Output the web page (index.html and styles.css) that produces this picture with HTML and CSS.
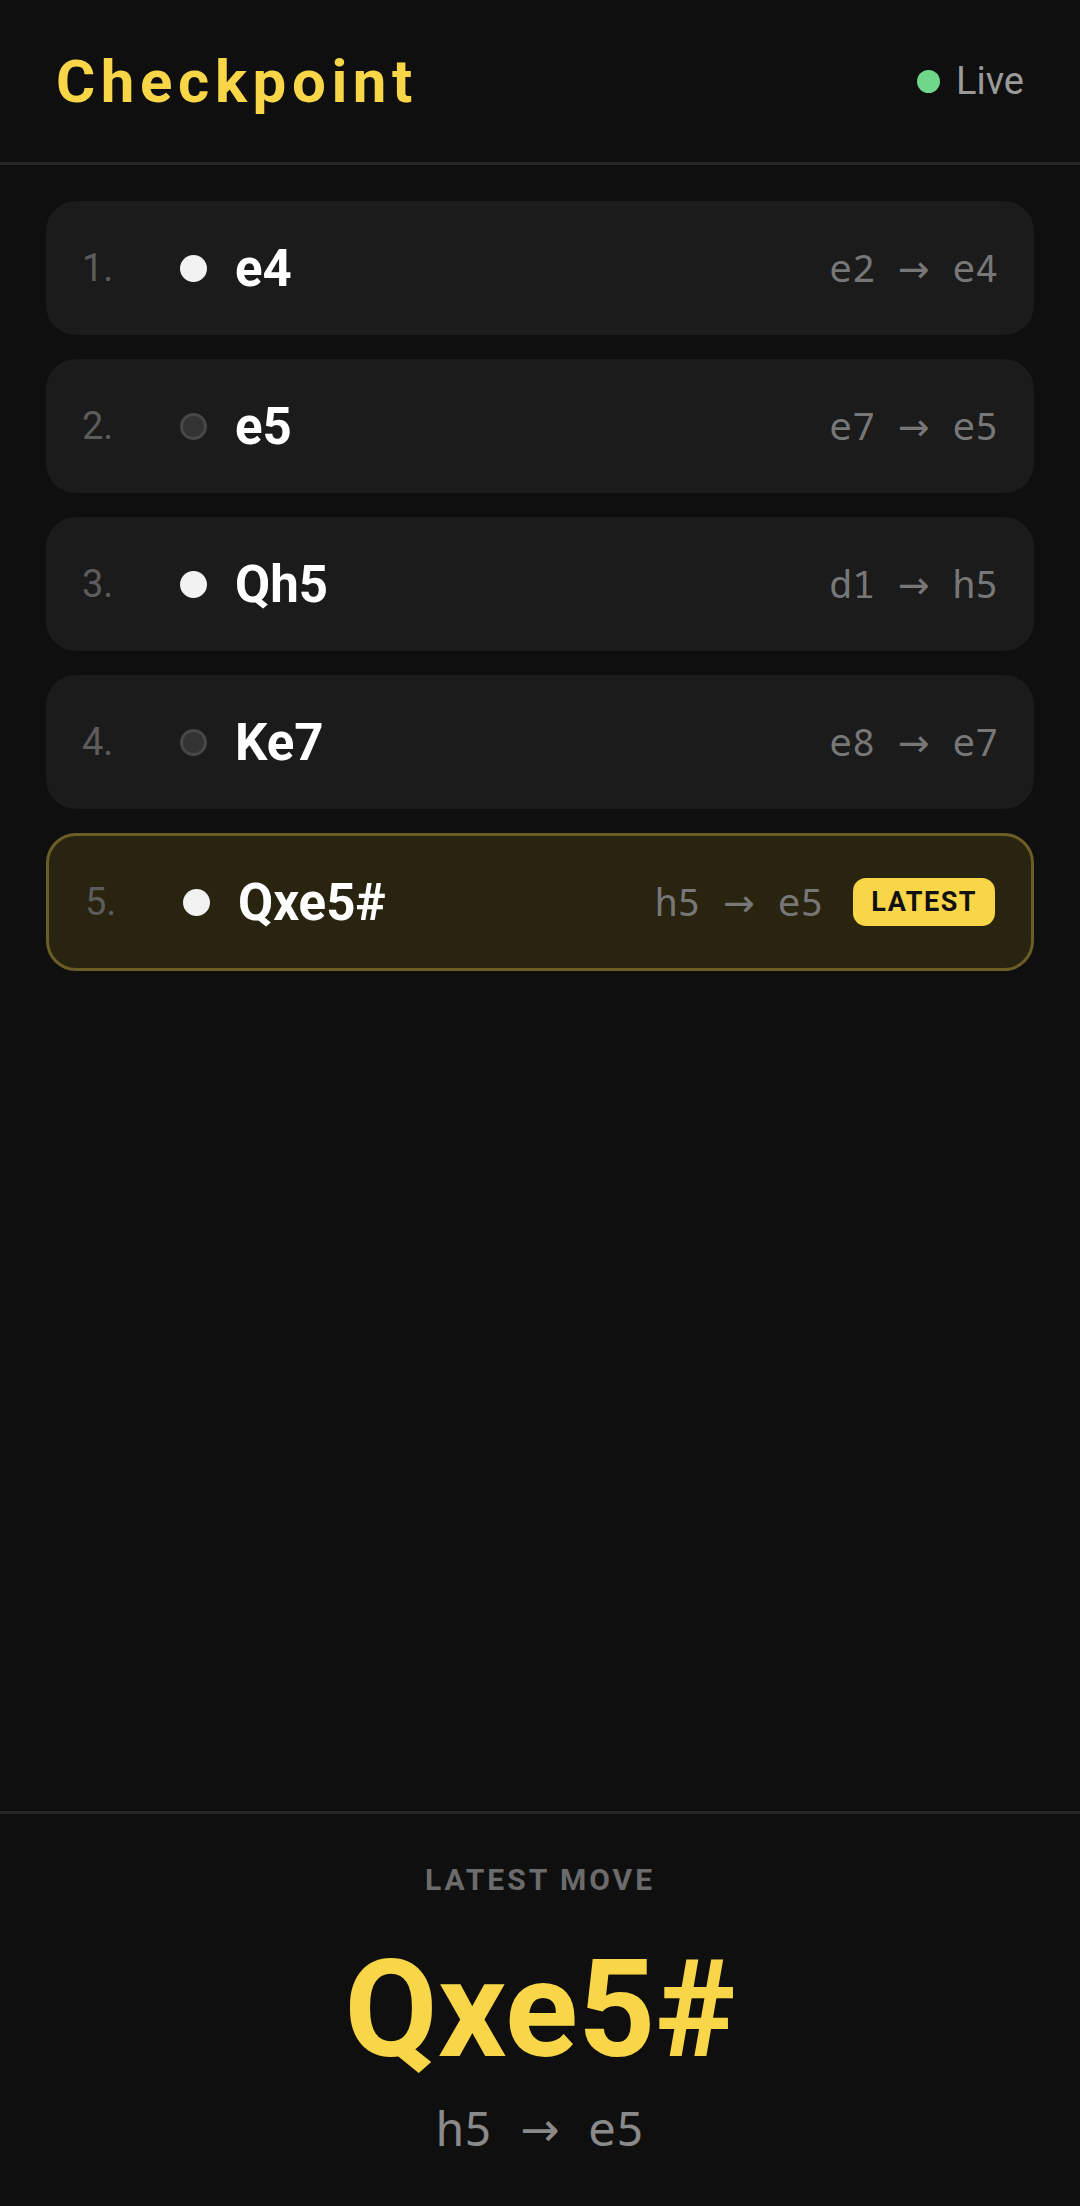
FILE: index.html
```html
<html lang="en">
<head>
    <title>Checkpoint</title>
    <meta charset="utf-8">
    <link rel="stylesheet" href="styles.css">
</head>

<body>
    <div id='app'>
        <div class='header'>
            <div class='title'>Checkpoint</div>
            <div class='live'><span class='live-dot'></span>Live</div>
        </div>

        <div class='moves'>
            <div class='move'>
                <div class='num'>1.</div>
                <div class='side white'></div>
                <div class='san'>e4</div>
                <div class='squares'>e2 <span class='arrow'>→</span> e4</div>
            </div>
            <div class='move'>
                <div class='num'>2.</div>
                <div class='side black'></div>
                <div class='san'>e5</div>
                <div class='squares'>e7 <span class='arrow'>→</span> e5</div>
            </div>
            <div class='move'>
                <div class='num'>3.</div>
                <div class='side white'></div>
                <div class='san'>Qh5</div>
                <div class='squares'>d1 <span class='arrow'>→</span> h5</div>
            </div>
            <div class='move'>
                <div class='num'>4.</div>
                <div class='side black'></div>
                <div class='san'>Ke7</div>
                <div class='squares'>e8 <span class='arrow'>→</span> e7</div>
            </div>
            <div class='move latest'>
                <div class='num'>5.</div>
                <div class='side white'></div>
                <div class='san'>Qxe5#</div>
                <div class='squares'>h5 <span class='arrow'>→</span> e5</div>
                <div class='badge'>LATEST</div>
            </div>
        </div>

        <div class='last'>
            <div class='last-label'>LATEST MOVE</div>
            <div class='last-san'>Qxe5#</div>
            <div class='last-squares'>h5 <span class='arrow'>→</span> e5</div>
        </div>
    </div>
</body>

</html>
```

FILE: styles.css
```css
body {
    background-color: #0f0f0f;
    margin: 0px;
    padding: 0px;
    font-family: Roboto, "Liberation Sans", sans-serif;
    color: #f5f5f5;
}

#app {
    display: flex;
    flex-direction: column;
    height: 2206px;
}

/* top bar */
div.header {
    height: 162px;
    padding: 0 56px;
    display: flex;
    align-items: center;
    justify-content: space-between;
    border-bottom: 3px solid #262626;
}

div.title {
    font-size: 60px;
    font-weight: 700;
    letter-spacing: 5.6px;
    color: #f8d648;
}

div.live {
    display: flex;
    align-items: center;
    font-size: 38px;
    color: #9a9a9a;
}

span.live-dot {
    width: 23px;
    height: 23px;
    border-radius: 50%;
    background-color: #6fd68a;
    margin-right: 16px;
}

/* move list */
div.moves {
    flex: 1;
    padding: 36px 46px;
    display: flex;
    flex-direction: column;
    gap: 24px;
}

div.move {
    height: 134px;
    box-sizing: border-box;
    padding: 0 36px;
    background-color: #1b1b1b;
    border-radius: 30px;
    display: flex;
    align-items: center;
}

div.move.latest {
    height: 138px;
    background-color: #29240f;
    border: 3px solid #6a5d26;
}

div.num {
    flex: 0 0 98px;
    font-size: 38px;
    color: #5c5c5c;
}

div.side {
    width: 27px;
    height: 27px;
    box-sizing: border-box;
    border-radius: 50%;
    margin-right: 28px;
}

div.side.white {
    background-color: #f2f2f2;
}

div.side.black {
    background-color: #333333;
    border: 3px solid #474747;
}

div.san {
    font-size: 51px;
    font-weight: 700;
    color: #ffffff;
}

div.squares {
    margin-left: auto;
    font-family: "Noto Sans Mono", "DejaVu Sans Mono", monospace;
    font-size: 38px;
    line-height: 46px;
    color: #777777;
}

span.arrow {
    font-family: "DejaVu Sans", sans-serif;
}

div.badge {
    margin-left: 30px;
    height: 48px;
    padding: 0 18px;
    display: flex;
    align-items: center;
    border-radius: 13px;
    background-color: #f8d648;
    color: #111111;
    font-size: 27px;
    font-weight: 700;
    letter-spacing: 1.5px;
}

/* bottom panel */
div.last {
    border-top: 3px solid #262626;
    padding: 48px 0;
    text-align: center;
}

div.last-label {
    font-size: 30px;
    font-weight: 700;
    letter-spacing: 3px;
    color: #6b6b6b;
}

div.last-san {
    margin-top: 46px;
    font-size: 135px;
    line-height: 1;
    font-weight: 700;
    color: #f8d648;
}

div.last-squares {
    margin-top: 22px;
    font-family: "Noto Sans Mono", "DejaVu Sans Mono", monospace;
    font-size: 47px;
    line-height: 56px;
    color: #8a8a8a;
}
```
